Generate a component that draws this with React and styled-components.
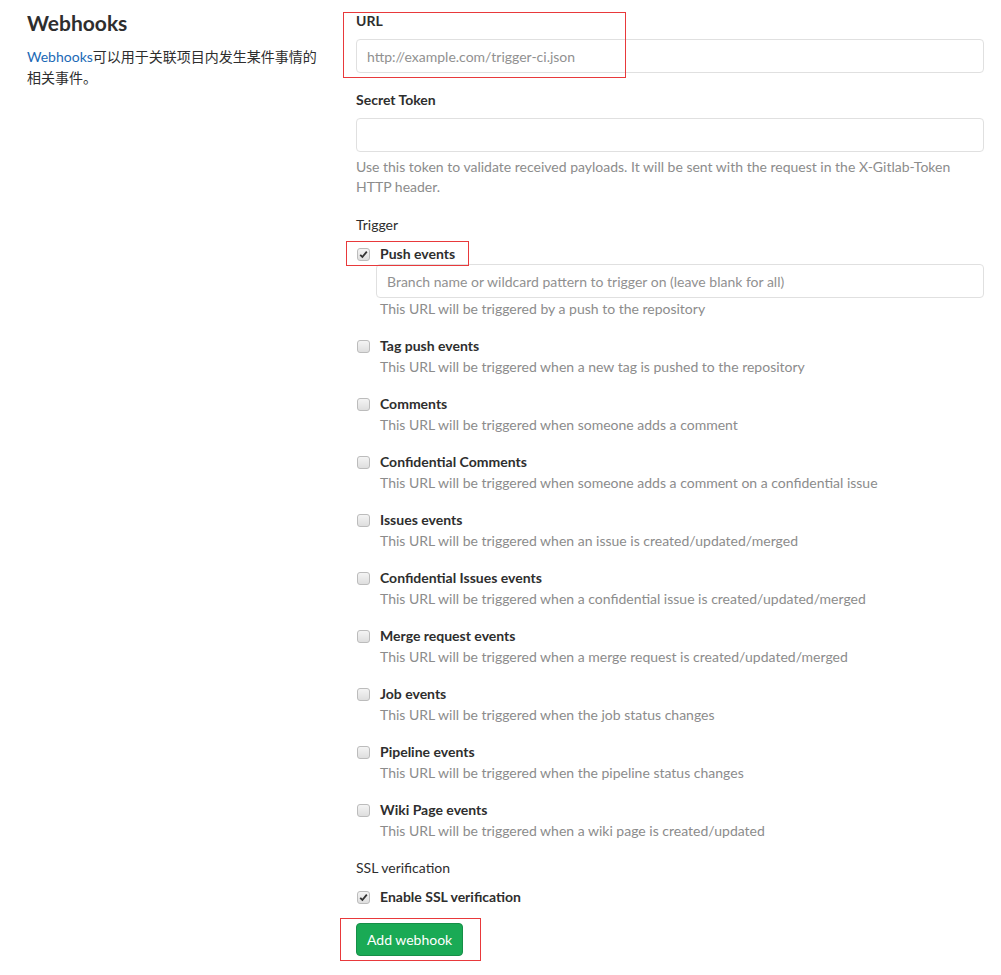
import React from 'react';
import styled, { createGlobalStyle } from 'styled-components';

const GlobalStyle = createGlobalStyle`
  body {
    margin: 0;
    background: #fff;
    font-family: Lato, 'Noto Sans CJK SC', sans-serif;
    font-size: 14px;
    color: #2e2e2e;
  }
`;

const Page = styled.div`
  display: grid;
  grid-template-columns: 329px 628px;
  padding: 11px 17px 0 27px;
  width: 1001px;
  box-sizing: border-box;
`;

const Side = styled.div`
  padding-right: 20px;
`;

const Title = styled.h4`
  margin: -1px 0 10px;
  font-size: 21px;
  font-weight: 700;
  line-height: 26px;
  color: #2e2e2e;
`;

const Intro = styled.p`
  margin: 0;
  max-width: 298px;
  font-size: 14px;
  line-height: 21px;
  color: #2e2e2e;
`;

const Link = styled.a`
  color: #1b69b6;
  text-decoration: none;
`;

const Form = styled.form`
  display: flex;
  flex-direction: column;
`;

const Group = styled.div`
  position: relative;
  margin-bottom: ${p => p.mb ?? 17}px;
`;

const Label = styled.label`
  display: block;
  line-height: 20px;
  font-weight: ${p => (p.light ? 400 : 700)};
  margin-bottom: ${p => p.mb ?? 8}px;
`;

const Input = styled.input`
  display: block;
  width: 100%;
  height: 34px;
  box-sizing: border-box;
  padding: 6px 10px;
  border: 1px solid #e0e0e0;
  border-radius: 4px;
  font-family: inherit;
  font-size: 14px;
  color: #2e2e2e;
  &::placeholder {
    color: #919191;
  }
`;

const Help = styled.p`
  margin: 5px 0 0;
  line-height: 20px;
  color: #8c8c8c;
`;

const Option = styled.div`
  margin-bottom: ${p => p.mb ?? 17}px;
`;

const OptionRow = styled.div`
  display: flex;
  align-items: center;
  height: 20px;
`;

const Box = styled.span`
  width: 13px;
  height: 13px;
  box-sizing: border-box;
  margin: 0 10px 0 1px;
  border: 1px solid #bcbcbc;
  border-radius: 3px;
  background: linear-gradient(#f4f4f4, #dedede);
  display: flex;
  align-items: center;
  justify-content: center;
  flex: none;
`;

const OptionLabel = styled.span`
  font-weight: 700;
  line-height: 20px;
`;

const OptionBody = styled.div`
  padding-left: 20px;
`;

const OptionHelp = styled.p`
  margin: 1px 0 0 4px;
  line-height: 20px;
  color: #8c8c8c;
`;

const Button = styled.button`
  align-self: flex-start;
  height: 33px;
  padding: 0 10px;
  border: 1px solid #168f48;
  border-radius: 4px;
  background: #1aaa55;
  color: #fff;
  font-family: inherit;
  font-size: 14px;
  line-height: 20px;
`;

const Mark = styled.div`
  position: absolute;
  border: 1px solid #e8393b;
  pointer-events: none;
`;

const Check = () => (
  <svg width="9" height="9" viewBox="0 0 9 9">
    <path d="M1.2 4.8 L3.4 7 L7.8 1.6" fill="none" stroke="#333" strokeWidth="1.8" />
  </svg>
);

const CheckOption = ({ checked, label, help, mb, children }) => (
  <Option mb={mb}>
    <OptionRow>
      <Box>{checked && <Check />}</Box>
      <OptionLabel>{label}</OptionLabel>
    </OptionRow>
    <OptionBody>
      {children}
      {help && <OptionHelp>{help}</OptionHelp>}
    </OptionBody>
  </Option>
);

const events = [
  ['Tag push events', 'This URL will be triggered when a new tag is pushed to the repository'],
  ['Comments', 'This URL will be triggered when someone adds a comment'],
  ['Confidential Comments', 'This URL will be triggered when someone adds a comment on a confidential issue'],
  ['Issues events', 'This URL will be triggered when an issue is created/updated/merged'],
  ['Confidential Issues events', 'This URL will be triggered when a confidential issue is created/updated/merged'],
  ['Merge request events', 'This URL will be triggered when a merge request is created/updated/merged'],
  ['Job events', 'This URL will be triggered when the job status changes'],
  ['Pipeline events', 'This URL will be triggered when the pipeline status changes'],
  ['Wiki Page events', 'This URL will be triggered when a wiki page is created/updated'],
];

export default function App() {
  return (
    <>
      <GlobalStyle />
      <Page>
        <Side>
          <Title>Webhooks</Title>
          <Intro>
            <Link href="#">Webhooks</Link>可以用于关联项目内发生某件事情的相关事件。
          </Intro>
        </Side>
        <Form>
          <Group>
            <Label>URL</Label>
            <Input placeholder="http://example.com/trigger-ci.json" />
            <Mark style={{ left: -13, top: 1, width: 281, height: 64 }} />
          </Group>
          <Group mb={18}>
            <Label>Secret Token</Label>
            <Input />
            <Help>
              Use this token to validate received payloads. It will be sent with the request in the X-Gitlab-Token
              HTTP header.
            </Help>
          </Group>
          <Group mb={0}>
            <Label light mb={9}>Trigger</Label>
            <CheckOption checked label="Push events" help="This URL will be triggered by a push to the repository">
              <Input placeholder="Branch name or wildcard pattern to trigger on (leave blank for all)" />
            </CheckOption>
            <Mark style={{ left: -10, top: 26, width: 121, height: 23 }} />
            {events.map(([label, help]) => (
              <CheckOption key={label} label={label} help={help} />
            ))}
          </Group>
          <Group mb={0}>
            <Label light mb={9}>SSL verification</Label>
            <CheckOption checked label="Enable SSL verification" mb={16} />
          </Group>
          <Group>
            <Button type="button">Add webhook</Button>
            <Mark style={{ left: -16, top: -5, width: 139, height: 41 }} />
          </Group>
        </Form>
      </Page>
    </>
  );
}
